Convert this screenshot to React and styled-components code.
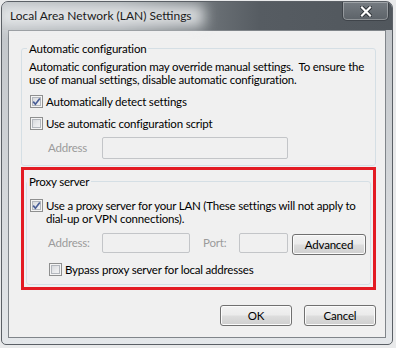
import React from 'react';
import styled, { createGlobalStyle } from 'styled-components';

const GlobalStyle = createGlobalStyle`
    html, body {
        margin: 0;
        padding: 0;
        background: #e9eaeb;
    }
    body {
        font-family: Lato, "Noto Sans", sans-serif;
        font-size: 11.5px;
        letter-spacing: -0.2px;
        color: #000;
    }
`

const Window = styled.div`
    box-sizing: border-box;
    width: 392px;
    height: 344px;
    margin: 1px 0 0 1px;
    border: 1px solid #5b6066;
    border-radius: 7px 7px 5px 5px;
    background: linear-gradient(to bottom, #bfc3c7 0%, #d4d7da 55%, #e4e7ea 100%);
    display: flex;
    flex-direction: column;
    overflow: hidden;
`

const TitleBar = styled.div`
    height: 28px;
    flex-shrink: 0;
    display: flex;
    align-items: center;
    background: linear-gradient(90deg, #b9bdc1 0%, #a3a8ad 30%, #6d7378 52%, #565c62 66%, #51575d 100%);
`

const Title = styled.span`
    position: relative;
    margin-left: 8px;
    color: #1b1b1b;
    font-size: 12px;
    letter-spacing: 0;
    line-height: 16px;
    white-space: nowrap;

    &::before {
        content: "";
        position: absolute;
        inset: -3px -12px;
        background: rgba(236, 238, 240, 0.85);
        filter: blur(7px);
    }
`

const TitleText = styled.span`
    position: relative;
`

const CloseButton = styled.div`
    box-sizing: border-box;
    width: 47px;
    height: 19px;
    margin-left: auto;
    margin-right: 3px;
    align-self: flex-start;
    display: flex;
    align-items: center;
    justify-content: center;
    border: 1px solid #3f444a;
    border-top: none;
    border-radius: 0 0 5px 5px;
    box-shadow: inset 0 0 0 1px rgba(255, 255, 255, 0.3);
    background: linear-gradient(to bottom, #767c82, #5c6268);
`

const Client = styled.div`
    flex: 1;
    margin: 0 6px 6px;
    border: 1px solid #80858a;
    background: #f0f0f0;
    padding: 10px 9px 0 12px;
`

const Group = styled.fieldset`
    margin: 0;
    padding: 0 0 ${p => p.$pb}px 0;
    min-width: 0;
    border: 1px solid #d5dfe5;
    border-radius: 3px;
`

const Legend = styled.legend`
    margin-left: ${p => p.$offset}px;
    padding: 0 2px;
    line-height: 15px;
`

const Desc = styled.div`
    margin: 4px 0 0 7px;
    line-height: 13px;
    white-space: pre;
`

const CheckRow = styled.div`
    display: flex;
    align-items: flex-start;
    gap: 3px;
    margin: ${p => p.$top}px 0 0 ${p => p.$left}px;
    line-height: 13px;
    white-space: nowrap;
`

const Box = styled.span`
    box-sizing: border-box;
    width: 13px;
    height: 13px;
    flex-shrink: 0;
    display: flex;
    align-items: center;
    justify-content: center;
    border: 1px solid #8e8f8f;
    box-shadow: inset 0 0 0 1px #f4f4f4, inset 0 0 0 2px #b3b7bd;
    background: linear-gradient(135deg, #cfd2d6 0%, #e9eaec 55%, #f7f7f7 100%);
`

const FieldRow = styled.div`
    display: flex;
    align-items: flex-start;
    margin: ${p => p.$top}px 0 0 ${p => p.$left}px;
`

const FieldLabel = styled.span`
    width: ${p => p.$w}px;
    margin-left: ${p => p.$ml || 0}px;
    flex-shrink: 0;
    height: ${p => p.$h}px;
    line-height: ${p => p.$h}px;
    color: #9b9b9b;
`

const TextBox = styled.div`
    box-sizing: border-box;
    width: ${p => p.$w}px;
    height: ${p => p.$h}px;
    flex-shrink: 0;
    border: 1px solid #c3c5c8;
    border-radius: 2px;
    background: #f0f0f0;
`

const Button = styled.button`
    box-sizing: border-box;
    width: ${p => p.$w}px;
    height: 21px;
    margin: ${p => p.$mt || 0}px 0 0 ${p => p.$ml || 0}px;
    padding: 0;
    font-family: inherit;
    font-size: 11.5px;
    letter-spacing: -0.2px;
    color: #000;
    border: 1px solid #707070;
    border-radius: 3px;
    box-shadow: inset 0 0 0 1px #fbfbfb;
    background: linear-gradient(to bottom, #f2f2f2 0%, #ebebeb 48%, #dddddd 52%, #cfcfcf 100%);
`

const RedBox = styled.div`
    margin-top: 1px;
    border: 3px solid #e31b23;
    padding: 4px 2px 2px;
`

const ButtonRow = styled.div`
    display: flex;
    justify-content: flex-end;
    gap: 12px;
    margin-top: 15px;
`

function Checkbox({ checked }) {
    return (
        <Box>
            {checked && (
                <svg width="9" height="9" viewBox="0 0 9 9">
                    <path d="M1.2 4.6 L3.4 7.2 L7.8 1.4" fill="none" stroke="#4a5f97" strokeWidth="1.7" />
                </svg>
            )}
        </Box>
    )
}

function App() {
    return (
        <>
            <GlobalStyle />
            <Window>
                <TitleBar>
                    <Title><TitleText>Local Area Network (LAN) Settings</TitleText></Title>
                    <CloseButton>
                        <svg width="12" height="11" viewBox="0 0 12 11">
                            <path d="M2 1.5 L10 9.5 M10 1.5 L2 9.5" stroke="#2b3035" strokeWidth="4" strokeLinecap="square" />
                            <path d="M2 1.5 L10 9.5 M10 1.5 L2 9.5" stroke="#fff" strokeWidth="2.2" strokeLinecap="square" />
                        </svg>
                    </CloseButton>
                </TitleBar>
                <Client>
                    <Group $pb={6}>
                        <Legend $offset={5}>Automatic configuration</Legend>
                        <Desc>{'Automatic configuration may override manual settings.  To ensure the\nuse of manual settings, disable automatic configuration.'}</Desc>
                        <CheckRow $top={9} $left={8}>
                            <Checkbox checked />
                            <span>Automatically detect settings</span>
                        </CheckRow>
                        <CheckRow $top={9} $left={8}>
                            <Checkbox />
                            <span>Use automatic configuration script</span>
                        </CheckRow>
                        <FieldRow $top={7} $left={26}>
                            <FieldLabel $w={54} $h={22}>Address</FieldLabel>
                            <TextBox $w={186} $h={22} />
                        </FieldRow>
                    </Group>
                    <RedBox>
                        <Group $pb={8}>
                            <Legend $offset={0}>Proxy server</Legend>
                            <CheckRow $top={10} $left={3}>
                                <Checkbox checked />
                                <span>Use a proxy server for your LAN (These settings will not apply to<br />dial-up or VPN connections).</span>
                            </CheckRow>
                            <FieldRow $top={8} $left={21}>
                                <FieldLabel $w={54} $h={20}>Address:</FieldLabel>
                                <TextBox $w={88} $h={20} />
                                <FieldLabel $w={36} $h={20} $ml={13}>Port:</FieldLabel>
                                <TextBox $w={49} $h={20} />
                                <Button $w={74} $mt={1} $ml={4}>Advanced</Button>
                            </FieldRow>
                            <CheckRow $top={8} $left={22}>
                                <Checkbox />
                                <span>Bypass proxy server for local addresses</span>
                            </CheckRow>
                        </Group>
                    </RedBox>
                    <ButtonRow>
                        <Button $w={72}>OK</Button>
                        <Button $w={72}>Cancel</Button>
                    </ButtonRow>
                </Client>
            </Window>
        </>
    )
}

export default App
